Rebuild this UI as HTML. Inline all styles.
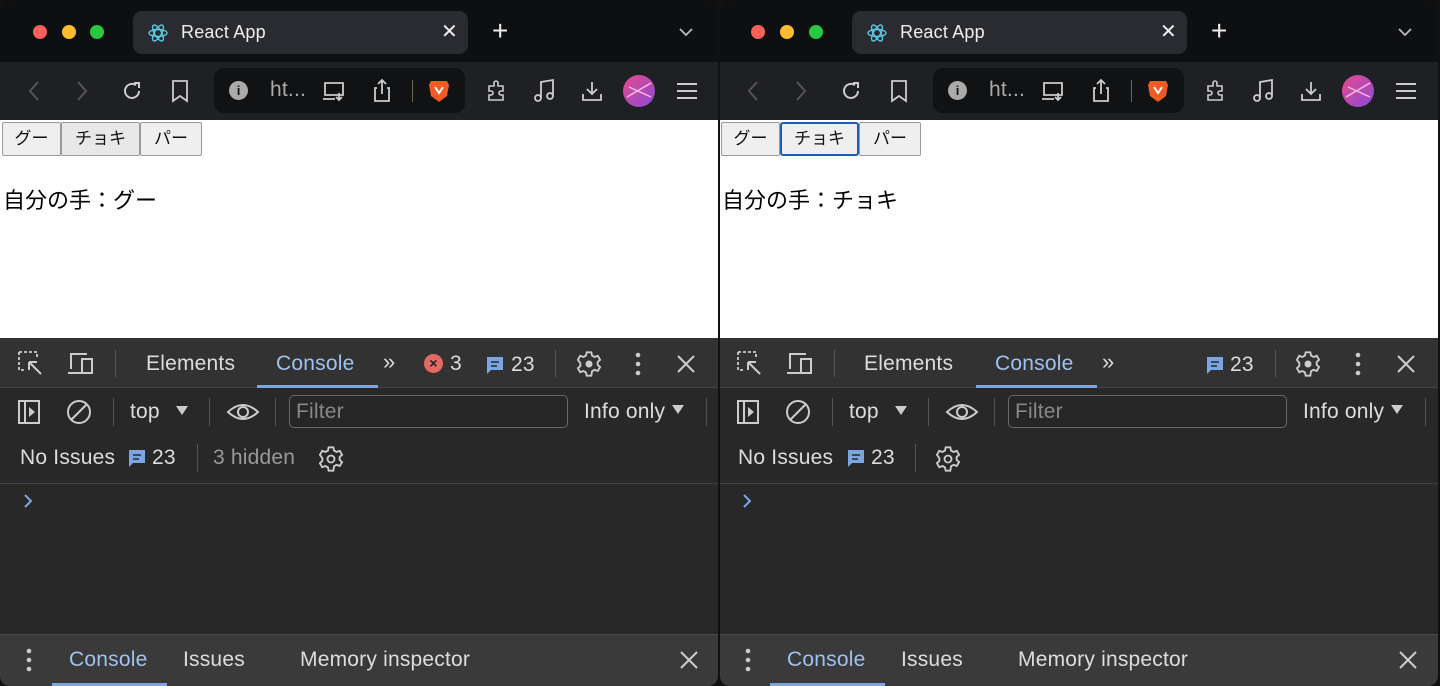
<!DOCTYPE html>
<html><head><meta charset="utf-8">
<style>
*{margin:0;padding:0;box-sizing:border-box}
body{width:1440px;height:686px;background:#111;overflow:hidden;position:relative;font-family:"Liberation Sans","Noto Sans CJK JP",sans-serif}
.p{position:absolute;top:0;width:718px;height:686px;border-radius:10px;overflow:hidden;background:#282828}
.a{position:absolute}
.tb{left:0;top:0;width:718px;height:62px;background:#0e0f11}
.tl{top:25px;width:14px;height:14px;border-radius:50%}
.tab{left:133px;top:11px;width:335px;height:43px;background:#2a2b30;border-radius:9px}
.tbar{left:0;top:62px;width:718px;height:58px;background:#1f2024}
.url{left:214px;top:68px;width:251px;height:45px;background:#111214;border-radius:10px}
.page{left:0;top:120px;width:718px;height:218px;background:#fff}
.btn{top:122px;height:34px;background:#efefef;border:1px solid #9a9a9a;border-radius:2px;font-size:17px;color:#111;text-align:center;line-height:32px}
.dh{left:0;top:338px;width:718px;height:50px;background:#323232;border-bottom:1px solid #444}
.t{color:#ddd;font-size:21px;white-space:nowrap;letter-spacing:0.2px;margin-top:-1px}
.sep{width:1px;background:#555}
.drawer{left:0;top:634px;width:718px;height:52px;background:#3a3a3a;border-top:1px solid #4a4a4a}
.jp{font-size:22px;color:#000;top:183px}
svg{position:absolute}
</style></head><body>

<!-- PANEL LEFT -->
<div class="p" style="left:0">
 <div class="a tb"></div>
 <div class="a tl" style="left:33px;background:#fe5f57"></div>
 <div class="a tl" style="left:62px;background:#febc2e"></div>
 <div class="a tl" style="left:90px;background:#28c840"></div>
 <div class="a tab"></div>
 <svg style="left:147px;top:22px" width="22" height="22" viewBox="0 0 22 22" fill="none" stroke="#5ac8e0" stroke-width="1.4"><ellipse cx="11" cy="11" rx="9" ry="3.5"/><ellipse cx="11" cy="11" rx="9" ry="3.5" transform="rotate(60 11 11)"/><ellipse cx="11" cy="11" rx="9" ry="3.5" transform="rotate(120 11 11)"/></svg>
 <div class="a t" style="left:181px;top:23px;font-size:18px;color:#eee">React App</div>
 <div class="a t" style="left:441px;top:20px;font-size:20px;color:#eee">✕</div>
 <div class="a t" style="left:492px;top:16px;font-size:28px;color:#eee;font-weight:300">+</div>
 <svg style="left:678px;top:27px" width="16" height="10"><path d="M2 2l6 6 6-6" stroke="#bbb" stroke-width="1.8" fill="none"/></svg>
 <div class="a tbar"></div>
 <svg style="left:27px;top:80px" width="14" height="22"><path d="M11 2L3 11l8 9" stroke="#555" stroke-width="2" fill="none"/></svg>
 <svg style="left:75px;top:80px" width="14" height="22"><path d="M3 2l8 9-8 9" stroke="#555" stroke-width="2" fill="none"/></svg>
 <svg style="left:120px;top:79px" width="24" height="24"><path d="M19 12a7 7 0 1 1-3-5.8" stroke="#ccc" stroke-width="2" fill="none"/><path d="M14 4h5v5" stroke="#ccc" stroke-width="2" fill="none"/></svg>
 <svg style="left:171px;top:79px" width="18" height="24"><path d="M2 2h14v20l-7-5-7 5z" stroke="#ccc" stroke-width="1.8" fill="none"/></svg>
 <div class="a url"></div>
 <div class="a" style="left:229px;top:81px;width:19px;height:19px;border-radius:50%;background:#aaa;color:#111;font-size:13px;font-weight:bold;text-align:center;line-height:19px">i</div>
 <div class="a t" style="left:270px;top:79px;color:#aaa">ht...</div>
 <svg style="left:322px;top:80px" width="26" height="22"><path d="M3 3h18v12H3zM1 19h12M17 13v7M14 17l3 3 3-3" stroke="#ccc" stroke-width="1.8" fill="none"/></svg>
 <svg style="left:372px;top:78px" width="20" height="26"><path d="M5 10H3v13h14V10h-2M10 16V2M6 6l4-4 4 4" stroke="#ccc" stroke-width="1.8" fill="none"/></svg>
 <div class="a sep" style="left:412px;top:80px;height:22px;background:#665"></div>
 <svg style="left:427px;top:78px" width="24" height="26"><path d="M4 3h16l2 4-2 11-8 6-8-6L2 7z" fill="#f05a24"/><path d="M8 9l4 6 4-6" stroke="#fff" stroke-width="2" fill="none"/></svg>
 <svg style="left:484px;top:78px" width="26" height="26"><path d="M5 8h5V5a2 2 0 0 1 4 0v3h5v5h-2a2 2 0 0 0 0 4h2v5H5v-5h2a2 2 0 0 0 0-4H5z" stroke="#ccc" stroke-width="1.6" fill="none"/></svg>
 <svg style="left:533px;top:78px" width="24" height="26"><path d="M8 20V4l12-2v15" stroke="#ccc" stroke-width="1.8" fill="none"/><circle cx="5" cy="20" r="3" stroke="#ccc" stroke-width="1.8" fill="none"/><circle cx="17" cy="18" r="3" stroke="#ccc" stroke-width="1.8" fill="none"/></svg>
 <svg style="left:581px;top:80px" width="22" height="22"><path d="M11 2v12M6 9l5 5 5-5M2 14v6h18v-6" stroke="#ccc" stroke-width="1.8" fill="none"/></svg>
 <div class="a" style="left:623px;top:75px;width:32px;height:32px;border-radius:50%;background:linear-gradient(135deg,#e84a8a,#8a4ad8)"></div>
 <svg style="left:623px;top:75px" width="32" height="32"><path d="M4 22L28 8M6 12l22 10" stroke="#fbd" stroke-width="1.5" fill="none"/></svg>
 <svg style="left:676px;top:82px" width="22" height="18"><path d="M1 2h20M1 9h20M1 16h20" stroke="#ccc" stroke-width="2"/></svg>
 <div class="a page"></div>
 <div class="a btn" style="left:2px;width:59px">グー</div>
 <div class="a btn" style="left:61px;width:79px;background:#e8e8e8">チョキ</div>
 <div class="a btn" style="left:140px;width:62px">パー</div>
 <div class="a jp" style="left:3px">自分の手：グー</div>
 <div class="a dh"></div>
 <svg style="left:17px;top:350px" width="28" height="28"><path d="M2 2h18v6M2 2v18h6" stroke="#ccc" stroke-width="1.8" stroke-dasharray="3 2" fill="none"/><path d="M12 12l12 12M12 12v8M12 12h8" stroke="#ccc" stroke-width="2" fill="none"/></svg>
 <svg style="left:66px;top:351px" width="30" height="26"><path d="M5 18V3h16M2 22h14M16 8h10v14H16z" stroke="#ccc" stroke-width="2" fill="none"/></svg>
 <div class="a sep" style="left:115px;top:350px;height:27px"></div>
 <div class="a t" style="left:146px;top:353px">Elements</div>
 <div class="a t" style="left:276px;top:353px;color:#9fc2ef">Console</div>
 <div class="a" style="left:257px;top:385px;width:121px;height:3px;background:#7ca5e4"></div>
 <div class="a t" style="left:383px;top:350px;font-size:22px">»</div>
 <div class="a" style="left:424px;top:354px;width:19px;height:19px;border-radius:50%;background:#e46962;color:#222;font-size:14px;text-align:center;line-height:19px;font-weight:bold">×</div>
 <div class="a t" style="left:450px;top:353px">3</div>
 <svg style="left:485px;top:355px" width="20" height="20"><path d="M2 2h16v13H6l-4 4z" fill="#7ca5e4"/><path d="M6 7h8M6 11h6" stroke="#282828" stroke-width="1.6"/></svg>
 <div class="a t" style="left:511px;top:354px">23</div>
 <div class="a sep" style="left:555px;top:350px;height:27px"></div>
 <svg style="left:575px;top:350px" width="28" height="28" viewBox="0 0 24 24"><path d="M10 2h4l.6 2.8 2.2 1.2 2.7-1 2 3.4-2.1 1.9v2.4l2.1 1.9-2 3.4-2.7-1-2.2 1.2L14 22h-4l-.6-2.8-2.2-1.2-2.7 1-2-3.4 2.1-1.9v-2.4L2.5 8.4l2-3.4 2.7 1L9.4 4.8z" stroke="#ccc" stroke-width="1.6" fill="none"/><circle cx="12" cy="12" r="3" fill="#ccc"/></svg>
 <svg style="left:634px;top:352px" width="8" height="24"><circle cx="4" cy="3" r="2.3" fill="#ccc"/><circle cx="4" cy="12" r="2.3" fill="#ccc"/><circle cx="4" cy="21" r="2.3" fill="#ccc"/></svg>
 <svg style="left:676px;top:354px" width="20" height="20"><path d="M2 2l16 16M18 2L2 18" stroke="#ccc" stroke-width="2"/></svg>
 <svg style="left:17px;top:399px" width="26" height="26"><path d="M2 2h20v22H2zM8 2v22" stroke="#ccc" stroke-width="2" fill="none"/><path d="M12 8l6 5-6 5z" fill="#ccc"/></svg>
 <svg style="left:66px;top:399px" width="28" height="26"><circle cx="13" cy="13" r="11" stroke="#ccc" stroke-width="2" fill="none"/><path d="M5 21L21 5" stroke="#ccc" stroke-width="2"/></svg>
 <div class="a sep" style="left:113px;top:398px;height:28px"></div>
 <div class="a t" style="left:130px;top:401px">top</div>
 <svg style="left:176px;top:406px" width="12" height="10"><path d="M0 0h12L6 9z" fill="#ccc"/></svg>
 <div class="a sep" style="left:209px;top:398px;height:28px"></div>
 <svg style="left:226px;top:400px" width="34" height="24"><path d="M2 12Q17-2 32 12Q17 26 2 12z" stroke="#ccc" stroke-width="2" fill="none"/><circle cx="17" cy="12" r="5" stroke="#ccc" stroke-width="2" fill="none"/></svg>
 <div class="a sep" style="left:275px;top:398px;height:28px"></div>
 <div class="a" style="left:289px;top:395px;width:279px;height:33px;border:1px solid #666;border-radius:5px;background:#262626"></div>
 <div class="a t" style="left:296px;top:401px;color:#888">Filter</div>
 <div class="a t" style="left:584px;top:401px">Info only</div>
 <svg style="left:672px;top:405px" width="12" height="10"><path d="M0 0h12L6 9z" fill="#ccc"/></svg>
 <div class="a sep" style="left:706px;top:398px;height:28px"></div>
 <div class="a t" style="left:20px;top:447px">No Issues</div>
 <svg style="left:127px;top:448px" width="20" height="20"><path d="M2 2h16v13H6l-4 4z" fill="#7ca5e4"/><path d="M6 7h8M6 11h6" stroke="#282828" stroke-width="1.6"/></svg>
 <div class="a t" style="left:152px;top:447px">23</div>
 <div class="a sep" style="left:197px;top:444px;height:28px"></div>
 <div class="a t" style="left:213px;top:447px;color:#999">3 hidden</div>
 <svg style="left:317px;top:445px" width="28" height="28" viewBox="0 0 24 24"><path d="M10 2h4l.6 2.8 2.2 1.2 2.7-1 2 3.4-2.1 1.9v2.4l2.1 1.9-2 3.4-2.7-1-2.2 1.2L14 22h-4l-.6-2.8-2.2-1.2-2.7 1-2-3.4 2.1-1.9v-2.4L2.5 8.4l2-3.4 2.7 1L9.4 4.8z" stroke="#ccc" stroke-width="1.6" fill="none"/><circle cx="12" cy="12" r="3" stroke="#ccc" stroke-width="1.6" fill="none"/></svg>
 <div class="a" style="left:0;top:483px;width:718px;height:1px;background:#3e3e3e"></div>
 <svg style="left:23px;top:493px" width="10" height="16"><path d="M2 2l6 6-6 6" stroke="#7ca5e4" stroke-width="2" fill="none"/></svg>
 <div class="a drawer"></div>
 <svg style="left:25px;top:648px" width="8" height="24"><circle cx="4" cy="3" r="2.3" fill="#ccc"/><circle cx="4" cy="12" r="2.3" fill="#ccc"/><circle cx="4" cy="21" r="2.3" fill="#ccc"/></svg>
 <div class="a t" style="left:69px;top:649px;color:#9fc2ef">Console</div>
 <div class="a" style="left:52px;top:683px;width:115px;height:3px;background:#7ca5e4"></div>
 <div class="a t" style="left:183px;top:649px">Issues</div>
 <div class="a t" style="left:300px;top:649px">Memory inspector</div>
 <svg style="left:680px;top:651px" width="18" height="18"><path d="M1 1l16 16M17 1L1 17" stroke="#ccc" stroke-width="2"/></svg>
</div>

<!-- PANEL RIGHT -->
<div class="p" style="left:720px">
 <div class="a tb"></div>
 <div class="a tl" style="left:31px;background:#fe5f57"></div>
 <div class="a tl" style="left:60px;background:#febc2e"></div>
 <div class="a tl" style="left:89px;background:#28c840"></div>
 <div class="a tab" style="left:132px"></div>
 <svg style="left:146px;top:22px" width="22" height="22" viewBox="0 0 22 22" fill="none" stroke="#5ac8e0" stroke-width="1.4"><ellipse cx="11" cy="11" rx="9" ry="3.5"/><ellipse cx="11" cy="11" rx="9" ry="3.5" transform="rotate(60 11 11)"/><ellipse cx="11" cy="11" rx="9" ry="3.5" transform="rotate(120 11 11)"/></svg>
 <div class="a t" style="left:180px;top:23px;font-size:18px;color:#eee">React App</div>
 <div class="a t" style="left:440px;top:20px;font-size:20px;color:#eee">✕</div>
 <div class="a t" style="left:491px;top:16px;font-size:28px;color:#eee;font-weight:300">+</div>
 <svg style="left:677px;top:27px" width="16" height="10"><path d="M2 2l6 6 6-6" stroke="#bbb" stroke-width="1.8" fill="none"/></svg>
 <div class="a tbar"></div>
 <svg style="left:26px;top:80px" width="14" height="22"><path d="M11 2L3 11l8 9" stroke="#555" stroke-width="2" fill="none"/></svg>
 <svg style="left:74px;top:80px" width="14" height="22"><path d="M3 2l8 9-8 9" stroke="#555" stroke-width="2" fill="none"/></svg>
 <svg style="left:119px;top:79px" width="24" height="24"><path d="M19 12a7 7 0 1 1-3-5.8" stroke="#ccc" stroke-width="2" fill="none"/><path d="M14 4h5v5" stroke="#ccc" stroke-width="2" fill="none"/></svg>
 <svg style="left:170px;top:79px" width="18" height="24"><path d="M2 2h14v20l-7-5-7 5z" stroke="#ccc" stroke-width="1.8" fill="none"/></svg>
 <div class="a url" style="left:213px"></div>
 <div class="a" style="left:228px;top:81px;width:19px;height:19px;border-radius:50%;background:#aaa;color:#111;font-size:13px;font-weight:bold;text-align:center;line-height:19px">i</div>
 <div class="a t" style="left:269px;top:79px;color:#aaa">ht...</div>
 <svg style="left:321px;top:80px" width="26" height="22"><path d="M3 3h18v12H3zM1 19h12M17 13v7M14 17l3 3 3-3" stroke="#ccc" stroke-width="1.8" fill="none"/></svg>
 <svg style="left:371px;top:78px" width="20" height="26"><path d="M5 10H3v13h14V10h-2M10 16V2M6 6l4-4 4 4" stroke="#ccc" stroke-width="1.8" fill="none"/></svg>
 <div class="a sep" style="left:411px;top:80px;height:22px;background:#665"></div>
 <svg style="left:426px;top:78px" width="24" height="26"><path d="M4 3h16l2 4-2 11-8 6-8-6L2 7z" fill="#f05a24"/><path d="M8 9l4 6 4-6" stroke="#fff" stroke-width="2" fill="none"/></svg>
 <svg style="left:483px;top:78px" width="26" height="26"><path d="M5 8h5V5a2 2 0 0 1 4 0v3h5v5h-2a2 2 0 0 0 0 4h2v5H5v-5h2a2 2 0 0 0 0-4H5z" stroke="#ccc" stroke-width="1.6" fill="none"/></svg>
 <svg style="left:532px;top:78px" width="24" height="26"><path d="M8 20V4l12-2v15" stroke="#ccc" stroke-width="1.8" fill="none"/><circle cx="5" cy="20" r="3" stroke="#ccc" stroke-width="1.8" fill="none"/><circle cx="17" cy="18" r="3" stroke="#ccc" stroke-width="1.8" fill="none"/></svg>
 <svg style="left:580px;top:80px" width="22" height="22"><path d="M11 2v12M6 9l5 5 5-5M2 14v6h18v-6" stroke="#ccc" stroke-width="1.8" fill="none"/></svg>
 <div class="a" style="left:622px;top:75px;width:32px;height:32px;border-radius:50%;background:linear-gradient(135deg,#e84a8a,#8a4ad8)"></div>
 <svg style="left:622px;top:75px" width="32" height="32"><path d="M4 22L28 8M6 12l22 10" stroke="#fbd" stroke-width="1.5" fill="none"/></svg>
 <svg style="left:675px;top:82px" width="22" height="18"><path d="M1 2h20M1 9h20M1 16h20" stroke="#ccc" stroke-width="2"/></svg>
 <div class="a page"></div>
 <div class="a btn" style="left:1px;width:59px">グー</div>
 <div class="a btn" style="left:60px;width:79px;border:2px solid #1a5fb4;border-radius:3px;line-height:30px">チョキ</div>
 <div class="a btn" style="left:139px;width:62px">パー</div>
 <div class="a jp" style="left:2px">自分の手：チョキ</div>
 <div class="a dh"></div>
 <svg style="left:16px;top:350px" width="28" height="28"><path d="M2 2h18v6M2 2v18h6" stroke="#ccc" stroke-width="1.8" stroke-dasharray="3 2" fill="none"/><path d="M12 12l12 12M12 12v8M12 12h8" stroke="#ccc" stroke-width="2" fill="none"/></svg>
 <svg style="left:65px;top:351px" width="30" height="26"><path d="M5 18V3h16M2 22h14M16 8h10v14H16z" stroke="#ccc" stroke-width="2" fill="none"/></svg>
 <div class="a sep" style="left:114px;top:350px;height:27px"></div>
 <div class="a t" style="left:144px;top:353px">Elements</div>
 <div class="a t" style="left:275px;top:353px;color:#9fc2ef">Console</div>
 <div class="a" style="left:256px;top:385px;width:121px;height:3px;background:#7ca5e4"></div>
 <div class="a t" style="left:382px;top:350px;font-size:22px">»</div>
 <svg style="left:485px;top:355px" width="20" height="20"><path d="M2 2h16v13H6l-4 4z" fill="#7ca5e4"/><path d="M6 7h8M6 11h6" stroke="#282828" stroke-width="1.6"/></svg>
 <div class="a t" style="left:510px;top:354px">23</div>
 <div class="a sep" style="left:555px;top:350px;height:27px"></div>
 <svg style="left:574px;top:350px" width="28" height="28" viewBox="0 0 24 24"><path d="M10 2h4l.6 2.8 2.2 1.2 2.7-1 2 3.4-2.1 1.9v2.4l2.1 1.9-2 3.4-2.7-1-2.2 1.2L14 22h-4l-.6-2.8-2.2-1.2-2.7 1-2-3.4 2.1-1.9v-2.4L2.5 8.4l2-3.4 2.7 1L9.4 4.8z" stroke="#ccc" stroke-width="1.6" fill="none"/><circle cx="12" cy="12" r="3" fill="#ccc"/></svg>
 <svg style="left:634px;top:352px" width="8" height="24"><circle cx="4" cy="3" r="2.3" fill="#ccc"/><circle cx="4" cy="12" r="2.3" fill="#ccc"/><circle cx="4" cy="21" r="2.3" fill="#ccc"/></svg>
 <svg style="left:676px;top:354px" width="20" height="20"><path d="M2 2l16 16M18 2L2 18" stroke="#ccc" stroke-width="2"/></svg>
 <svg style="left:16px;top:399px" width="26" height="26"><path d="M2 2h20v22H2zM8 2v22" stroke="#ccc" stroke-width="2" fill="none"/><path d="M12 8l6 5-6 5z" fill="#ccc"/></svg>
 <svg style="left:65px;top:399px" width="28" height="26"><circle cx="13" cy="13" r="11" stroke="#ccc" stroke-width="2" fill="none"/><path d="M5 21L21 5" stroke="#ccc" stroke-width="2"/></svg>
 <div class="a sep" style="left:112px;top:398px;height:28px"></div>
 <div class="a t" style="left:129px;top:401px">top</div>
 <svg style="left:175px;top:406px" width="12" height="10"><path d="M0 0h12L6 9z" fill="#ccc"/></svg>
 <div class="a sep" style="left:208px;top:398px;height:28px"></div>
 <svg style="left:225px;top:400px" width="34" height="24"><path d="M2 12Q17-2 32 12Q17 26 2 12z" stroke="#ccc" stroke-width="2" fill="none"/><circle cx="17" cy="12" r="5" stroke="#ccc" stroke-width="2" fill="none"/></svg>
 <div class="a sep" style="left:274px;top:398px;height:28px"></div>
 <div class="a" style="left:288px;top:395px;width:279px;height:33px;border:1px solid #666;border-radius:5px;background:#262626"></div>
 <div class="a t" style="left:295px;top:401px;color:#888">Filter</div>
 <div class="a t" style="left:583px;top:401px">Info only</div>
 <svg style="left:671px;top:405px" width="12" height="10"><path d="M0 0h12L6 9z" fill="#ccc"/></svg>
 <div class="a sep" style="left:705px;top:398px;height:28px"></div>
 <div class="a t" style="left:18px;top:447px">No Issues</div>
 <svg style="left:126px;top:448px" width="20" height="20"><path d="M2 2h16v13H6l-4 4z" fill="#7ca5e4"/><path d="M6 7h8M6 11h6" stroke="#282828" stroke-width="1.6"/></svg>
 <div class="a t" style="left:151px;top:447px">23</div>
 <div class="a sep" style="left:195px;top:444px;height:28px"></div>
 <svg style="left:214px;top:445px" width="28" height="28" viewBox="0 0 24 24"><path d="M10 2h4l.6 2.8 2.2 1.2 2.7-1 2 3.4-2.1 1.9v2.4l2.1 1.9-2 3.4-2.7-1-2.2 1.2L14 22h-4l-.6-2.8-2.2-1.2-2.7 1-2-3.4 2.1-1.9v-2.4L2.5 8.4l2-3.4 2.7 1L9.4 4.8z" stroke="#ccc" stroke-width="1.6" fill="none"/><circle cx="12" cy="12" r="3" stroke="#ccc" stroke-width="1.6" fill="none"/></svg>
 <div class="a" style="left:0;top:483px;width:718px;height:1px;background:#3e3e3e"></div>
 <svg style="left:22px;top:493px" width="10" height="16"><path d="M2 2l6 6-6 6" stroke="#7ca5e4" stroke-width="2" fill="none"/></svg>
 <div class="a drawer"></div>
 <svg style="left:24px;top:648px" width="8" height="24"><circle cx="4" cy="3" r="2.3" fill="#ccc"/><circle cx="4" cy="12" r="2.3" fill="#ccc"/><circle cx="4" cy="21" r="2.3" fill="#ccc"/></svg>
 <div class="a t" style="left:67px;top:649px;color:#9fc2ef">Console</div>
 <div class="a" style="left:50px;top:683px;width:115px;height:3px;background:#7ca5e4"></div>
 <div class="a t" style="left:181px;top:649px">Issues</div>
 <div class="a t" style="left:298px;top:649px">Memory inspector</div>
 <svg style="left:679px;top:651px" width="18" height="18"><path d="M1 1l16 16M17 1L1 17" stroke="#ccc" stroke-width="2"/></svg>
</div>
</body></html>
